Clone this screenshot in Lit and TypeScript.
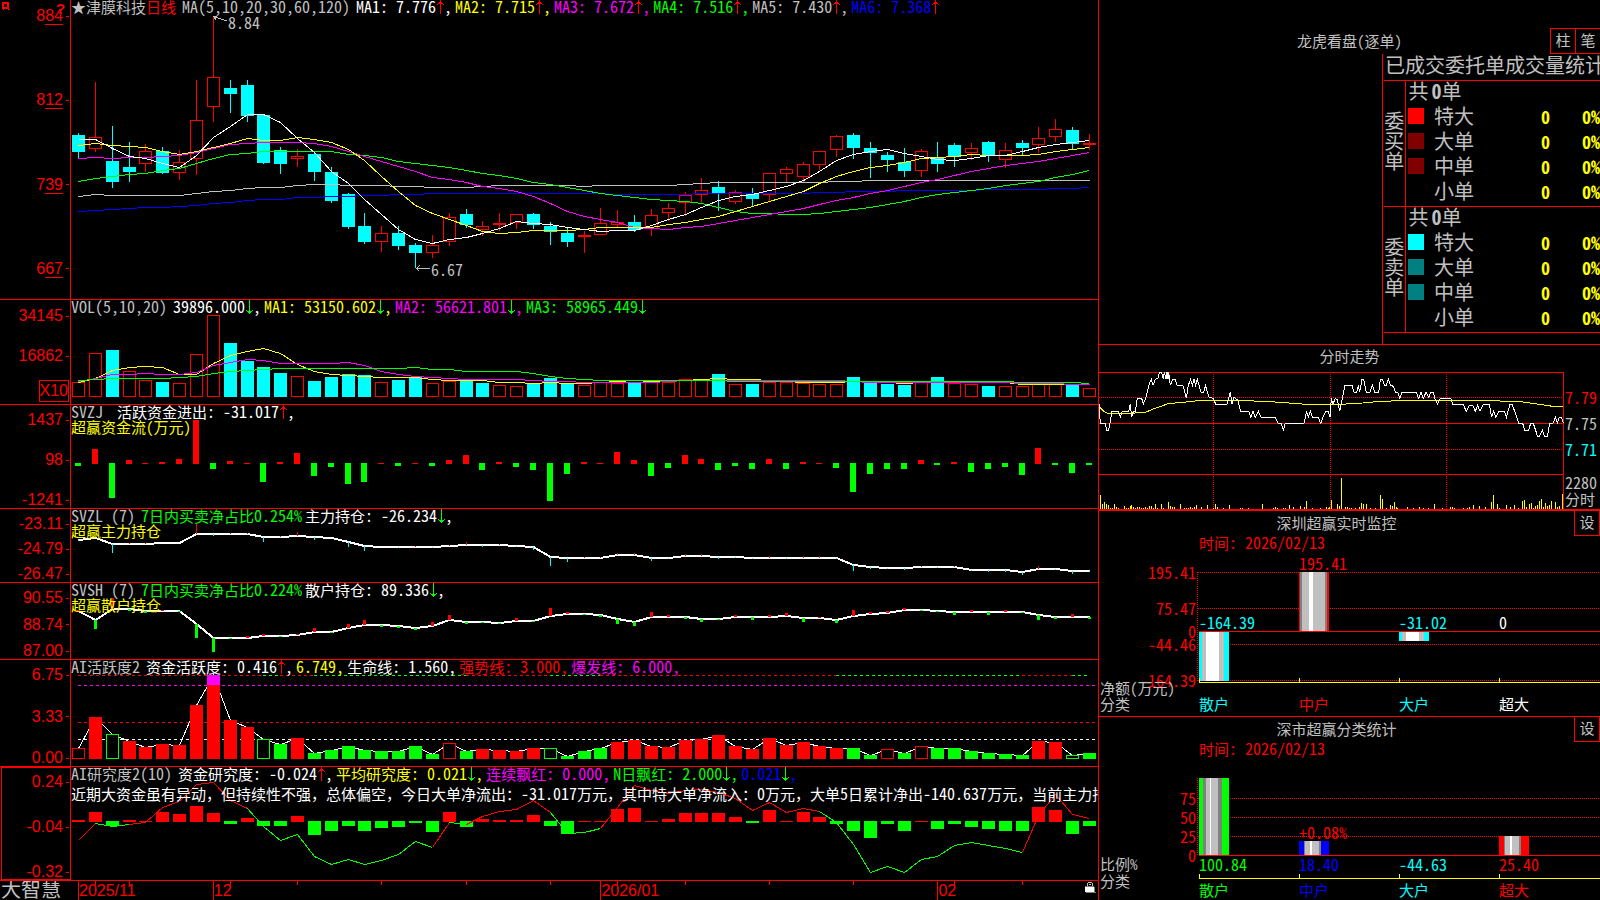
import { LitElement, html, svg, css, nothing } from "lit";

const RED = "#ff0000";
const CYAN = "#00ffff";
const GREEN = "#00ff00";
const YELLOW = "#ffff00";
const MAGENTA = "#ff00ff";
const BLUE = "#0000ff";
const GREY = "#c0c0c0";
const WHITE = "#ffffff";

const PLOT_W = 1027;
const STEP = 16.85;
const cx = (i: number) => 7 + Math.round(STEP * i);

/* High, body top, body bottom and low of each day; "c" falls, "r" rises. */
const CANDLES: [string, number, number, number, number][] = [
  ["c", 133, 135, 152, 158], ["r", 82, 137, 149, 152], ["c", 126, 161, 182, 188], ["c", 142, 167, 172, 182],
  ["r", 144, 151, 164, 172], ["c", 147, 151, 173, 174], ["r", 150, 162, 173, 180], ["r", 80, 120, 159, 175],
  ["r", 17, 77, 107, 122], ["c", 80, 88, 94, 113], ["c", 80, 85, 116, 122], ["c", 114, 115, 163, 164],
  ["c", 147, 150, 164, 174], ["r", 149, 156, 159, 167], ["c", 152, 154, 172, 181], ["c", 167, 172, 201, 203],
  ["c", 193, 194, 227, 229], ["c", 213, 226, 242, 244], ["r", 226, 233, 242, 252], ["c", 226, 233, 246, 250],
  ["c", 243, 245, 253, 268], ["r", 235, 245, 253, 258], ["r", 213, 217, 242, 246], ["c", 209, 214, 225, 228],
  ["r", 221, 226, 230, 236], ["r", 213, 223, 225, 231], ["r", 214, 214, 223, 229], ["c", 213, 214, 225, 229],
  ["c", 222, 226, 232, 245], ["c", 228, 233, 242, 247], ["r", 231, 235, 237, 253], ["r", 208, 223, 235, 235],
  ["r", 210, 222, 225, 228], ["c", 215, 222, 230, 232], ["r", 209, 215, 229, 236], ["r", 203, 208, 213, 221],
  ["r", 192, 195, 203, 216], ["r", 178, 190, 195, 203], ["c", 181, 187, 193, 211], ["r", 190, 192, 202, 204],
  ["c", 188, 194, 199, 206], ["r", 173, 173, 195, 201], ["r", 167, 169, 174, 182], ["r", 162, 164, 177, 182],
  ["r", 151, 151, 165, 170], ["r", 135, 136, 150, 157], ["c", 133, 135, 148, 159], ["c", 142, 148, 153, 178],
  ["c", 152, 155, 160, 172], ["c", 148, 162, 171, 177], ["r", 149, 151, 171, 177], ["c", 142, 158, 164, 172],
  ["c", 143, 145, 157, 167], ["r", 143, 148, 153, 160], ["c", 141, 142, 156, 162], ["r", 143, 150, 160, 168],
  ["c", 140, 143, 148, 155], ["r", 127, 138, 145, 153], ["r", 119, 129, 137, 142], ["c", 127, 130, 144, 150],
  ["r", 134, 143, 145, 150],
];

const MA: [string, number[]][] = [
  [BLUE, [211, 210, 209, 208, 207, 207, 206, 205, 203, 202, 200, 199, 199, 197, 197, 196, 196, 195, 195, 194, 194, 193, 193, 193, 193, 193, 193, 193, 193, 193, 193, 193, 194, 194, 194, 194, 194, 193, 193, 193, 193, 193, 193, 193, 192, 192, 191, 191, 191, 190, 190, 190, 190, 190, 189, 189, 189, 189, 188, 188, 187]],
  [GREY, [196, 194, 195, 195, 195, 195, 195, 193, 191, 190, 188, 187, 187, 185, 184, 184, 185, 185, 185, 186, 186, 187, 187, 187, 186, 185, 185, 185, 185, 185, 186, 185, 185, 185, 185, 185, 184, 183, 182, 182, 182, 182, 182, 182, 182, 181, 181, 180, 180, 180, 180, 180, 180, 180, 180, 180, 180, 180, 180, 180, 180]],
  [GREEN, [181, 178, 176, 174, 173, 170, 168, 163, 158, 154, 153, 151, 151, 151, 151, 151, 154, 155, 157, 161, 163, 165, 167, 170, 173, 175, 178, 182, 184, 187, 190, 193, 195, 197, 199, 200, 201, 203, 207, 211, 213, 213, 214, 214, 213, 211, 209, 207, 204, 201, 197, 194, 192, 190, 188, 185, 183, 181, 177, 174, 170]],
  [MAGENTA, [158, 157, 158, 157, 157, 156, 155, 152, 148, 144, 143, 142, 142, 142, 143, 146, 151, 156, 161, 166, 171, 177, 179, 182, 186, 188, 191, 196, 203, 211, 216, 219, 222, 227, 228, 229, 227, 226, 223, 220, 217, 214, 211, 208, 204, 200, 197, 193, 190, 186, 182, 179, 175, 171, 168, 165, 163, 161, 158, 155, 152]],
  [YELLOW, [145, 143, 145, 146, 147, 151, 154, 151, 147, 143, 138, 140, 140, 137, 139, 142, 149, 160, 176, 191, 205, 213, 219, 225, 231, 233, 232, 230, 230, 230, 229, 227, 227, 227, 227, 224, 222, 219, 216, 211, 206, 201, 196, 191, 183, 176, 171, 167, 165, 162, 158, 157, 156, 154, 155, 155, 155, 154, 151, 149, 147]],
  [WHITE, [139, 139, 148, 156, 158, 163, 167, 155, 137, 126, 114, 114, 122, 138, 152, 171, 183, 199, 214, 229, 239, 243, 239, 237, 233, 228, 221, 223, 224, 227, 229, 231, 230, 230, 225, 219, 214, 207, 200, 196, 194, 190, 186, 180, 171, 160, 154, 151, 149, 153, 156, 159, 160, 158, 155, 155, 151, 147, 144, 142, 140]],
];

/* Bars of the volume pane; a negative sign marks a falling day. */
const VOLUME = [15, 44, -47, 26, 17, -15, 14, 43, 82, -54, -36, -30, -24, 21, -16, -20, -23, -22, 15, -17, -20, 14, 16, -16, -14, 12, 11, -13, -19, -13, 12, 15, 14, -15, 17, 15, 18, 18, -23, 13, -13, 15, 15, 14, 13, 13, -20, -15, -13, -12, 16, -20, 14, 13, -11, 11, 11, 15, 13, -12, 9];

const VOLUME_MA: [string, number[]][] = [
  [YELLOW, [82, 78, 70, 67, 66, 67, 74, 74, 63, 55, 51, 48, 53, 64, 71, 74, 75, 76, 77, 77, 77, 79, 80, 80, 80, 82, 82, 83, 82, 83, 83, 82, 81, 82, 81, 81, 80, 79, 78, 79, 79, 80, 81, 82, 82, 82, 81, 82, 82, 83, 82, 82, 82, 82, 82, 82, 84, 84, 84, 84, 84]],
  [MAGENTA, [81, 78, 74, 74, 73, 74, 74, 72, 65, 62, 59, 60, 63, 63, 63, 63, 62, 65, 71, 74, 76, 77, 78, 79, 79, 79, 79, 80, 81, 81, 82, 82, 82, 82, 82, 81, 80, 80, 80, 80, 80, 80, 80, 80, 80, 80, 81, 82, 82, 82, 82, 82, 82, 82, 82, 82, 83, 83, 83, 84, 84]],
  [GREEN, [80, 79, 78, 78, 78, 78, 77, 76, 73, 71, 70, 69, 68, 68, 68, 68, 68, 68, 68, 68, 67, 69, 69, 71, 71, 71, 71, 73, 76, 78, 79, 80, 80, 80, 80, 80, 80, 80, 80, 81, 81, 81, 81, 81, 81, 81, 81, 81, 81, 81, 81, 81, 81, 81, 81, 81, 82, 82, 82, 82, 83]],
];

const FLOW = [-3, 15, -35, 4, 1, 2, 5, 44, -6, 3, 1, -19, 2, 11, -13, -4, -21, -19, 1, -3, 1, -3, 4, 9, -7, 2, -4, -7, -38, -11, 2, 1, 12, 4, -13, -5, 9, 5, -7, -3, -6, 5, -6, 2, 1, -5, -29, -11, -6, -6, 4, -2, 2, -9, -6, -4, -12, 16, -2, -10, -2];

const MAIN_HOLD = [31, 29, 35, 35, 35, 34, 34, 25, 25, 25, 25, 28, 28, 27, 28, 29, 33, 37, 38, 38, 38, 38, 37, 36, 36, 36, 37, 38, 48, 49, 49, 49, 46, 46, 49, 49, 47, 47, 48, 48, 49, 49, 49, 49, 49, 49, 56, 58, 59, 59, 58, 58, 58, 61, 61, 61, 63, 60, 60, 62, 62];
const MAIN_TICKS = [-1, 0, -9, 1, 1, 0, 0, 10, -2, 1, 1, -5, 1, 4, -3, 0, -5, -5, 0, -1, 1, -1, 1, 3, -2, 1, -1, -3, -9, -4, 1, 1, 2, 2, -3, -1, 2, 2, -2, -1, -1, 2, -1, 2, 2, -1, -6, -2, -1, -2, 1, -1, 1, -1, -2, -2, -3, 3, -1, -3, -1];

const RETAIL_HOLD = [28, 37, 26, 26, 28, 28, 28, 41, 55, 55, 55, 53, 53, 52, 49, 49, 45, 42, 42, 43, 45, 43, 37, 39, 39, 40, 38, 38, 33, 31, 31, 32, 36, 39, 34, 34, 34, 36, 36, 34, 34, 34, 33, 35, 35, 37, 33, 31, 30, 27, 27, 28, 29, 29, 29, 29, 29, 32, 34, 34, 34];
const RETAIL_TICKS = [1, -9, 11, -2, -2, 1, -1, -14, -14, -1, 2, 2, -1, 1, 4, -1, 4, 5, -2, -2, -2, 4, 5, -2, -1, -1, 3, -1, 8, 2, -1, -2, -5, -4, 5, 2, -2, -3, -1, 2, -3, 2, 3, -4, 1, -3, 6, 2, 2, 2, -1, -1, -3, 2, -3, 2, -1, -5, -2, 3, -2];

/* Activity: lower case is a filled bar, upper case an outlined one. */
const ACTIVITY = "R88 r57 G74 r81 r87 r84 r85 r45 r25 r60 r67 G79 g84 r78 g93 g90 g86 g90 g91 g91 g86 g94 R83 g91 r89 r90 r91 r88 G88 g96 g91 g88 r82 r80 r86 r87 r80 r79 r75 r86 r89 r78 r85 r82 r86 r88 g88 g95 R89 g93 R86 g88 g88 g91 g93 g94 g95 r81 r82 G95 g93"
  .split(" ").map((s) => [s[0], Number(s.slice(1))] as [string, number]);
const ACTIVITY_TREND: [string, number, number][] = [
  [RED, 0, 11], [GREEN, 11, 12], [RED, 12, 14], [GREEN, 14, 23], [RED, 23, 28], [GREEN, 28, 31],
  [RED, 31, 45], [GREEN, 45, 56], [RED, 56, 59], [GREEN, 59, 60],
];

const STUDY = [2, 10, -5, 2, 1, 10, 8, 16, 9, -3, 4, -5, -5, 6, -14, -10, -5, -10, -7, -6, -2, -11, 10, -6, 3, 2, 2, 7, -5, -13, 1, 1, 13, 14, 1, 3, 9, 9, 9, 5, -2, 12, 1, 10, 5, -3, -10, -17, -3, -10, 1, -8, -3, -6, -8, -10, -10, 15, 12, -13, -5];
const STUDY_LINE = [73, 56, 59, 57, 55, 40, 34, 17, 15, 33, 41, 59, 73, 67, 89, 97, 92, 97, 93, 87, 74, 80, 55, 57, 49, 44, 42, 33, 45, 66, 65, 61, 40, 18, 23, 26, 23, 22, 25, 31, 43, 35, 45, 41, 44, 55, 77, 105, 99, 105, 92, 89, 78, 75, 78, 81, 85, 48, 27, 47, 51];
const STUDY_SEGMENTS: [string, number, number][] = [
  [RED, 0, 1], [GREEN, 1, 3], [RED, 3, 10], [GREEN, 10, 21], [RED, 21, 22], [GREEN, 22, 23], [RED, 23, 28],
  [GREEN, 28, 31], [RED, 31, 44], [GREEN, 44, 56], [RED, 56, 60],
];

const DAY_PRICE = "9,192 13,250 27,250 32,270 38,270 42,250 48,214 68,214 73,232 79,214 98,214 103,192 107,232 112,214 118,214 124,175 137,175 142,192 150,172 160,130 166,118 171,136 178,118 186,115 190,97 197,97 202,118 205,97 210,118 213,97 216,118 218,97 223,136 230,118 237,118 243,136 260,136 266,154 271,175 277,136 284,118 289,136 294,118 299,136 304,118 315,157 323,157 328,136 339,172 352,175 359,192 393,192 403,157 408,192 413,172 425,180 434,214 458,214 464,232 471,214 478,232 487,214 495,232 537,232 546,250 556,250 562,270 568,250 624,250 632,214 637,232 643,214 649,232 667,232 674,250 681,232 690,214 697,214 702,232 706,175 711,192 718,175 724,180 731,214 738,180 747,136 768,136 774,157 782,157 787,136 791,157 798,118 803,118 811,157 822,157 829,136 836,157 848,157 853,118 859,118 865,136 871,136 877,118 884,136 892,139 899,157 905,157 911,175 918,157 961,157 968,175 975,157 982,175 990,157 998,172 1004,157 1012,157 1018,180 1024,192 1033,175 1064,175 1070,192 1101,192 1111,214 1120,195 1130,195 1138,214 1145,195 1152,214 1162,192 1180,192 1187,232 1193,214 1199,232 1208,214 1225,214 1231,232 1242,192 1248,192 1256,214 1268,250 1280,250 1286,270 1298,270 1304,250 1312,250 1325,290 1330,290 1339,270 1346,290 1354,290 1361,250 1371,250 1378,232 1384,250 1390,232 1396,232 1402,250";
const DAY_AVERAGE = "9,200 22,213 34,219 118,219 150,216 177,205 217,191 260,187 315,181 430,181 538,186 630,193 735,193 800,189 850,184 960,181 1150,181 1275,185 1310,190 1370,199 1402,199";
const DAY_VOLUME = "13:465 19:492 25:486 31:492 37:495 43:504 49:504 55:492 61:501 67:504 85:498 91:504 97:504 103:498 106:495 112:501 118:504 124:501 130:501 136:504 142:504 148:501 154:504 160:498 166:498 172:504 178:492 184:504 196:492 202:504 217:486 223:498 229:501 235:501 253:492 265:504 271:504 277:504 283:501 289:504 295:501 301:495 316:501 334:495 352:504 358:492 364:501 382:504 400:495 433:504 439:504 457:504 499:492 532:504 538:501 544:504 562:504 568:504 580:495 592:501 613:498 625:501 631:483 649:504 673:504 691:501 697:504 701:501 706:480 724:492 730:498 736:414 748:501 754:501 760:504 766:504 778:504 790:501 796:489 802:492 811:492 823:504 838:504 853:465 859:477 871:504 883:495 889:498 895:486 901:501 904:504 935:501 952:504 970:501 983:504 998:504 1015:492 1039:504 1063:501 1069:501 1075:504 1103:504 1114:504 1120:501 1132:495 1150:498 1168:501 1186:486 1192:465 1204:492 1210:504 1231:495 1243:501 1255:495 1267:504 1279:483 1285:480 1291:501 1300:492 1306:489 1312:504 1318:498 1324:495 1330:483 1336:477 1342:501 1348:489 1354:498 1360:495 1366:483 1378:486 1384:501 1390:498 1400:462"
  .split(" ").map((s) => s.split(":").map(Number));

type Item = { text: string; color: string; arrow?: "up" | "down"; end?: string };

/* Chinese runs are set one size smaller than the half-width Latin ones. */
const mixed = (text: string) =>
  text.split(/([^\x00-\xff]+)/).map((part, i) => (i % 2 ? html`<span class="zh">${part}</span>` : part));

const arrow = (dir: "up" | "down") => html`<svg class="arrow" width="8" height="16" viewBox="0 0 8 16" aria-hidden="true">
  ${dir === "up"
    ? svg`<path d="M4 0h1v14H4zM3 2h3v1H3zM2 3h5v1H2zM1 4h1v1H1zM7 4h1v1H7z" fill=${RED} />`
    : svg`<path d="M4 0h1v14H4zM3 12h3v1H3zM2 11h5v1H2zM1 10h1v1H1zM7 10h1v1H7z" fill=${GREEN} />`}
</svg>`;

const header = (name: unknown, items: Item[]) => html`<header class="head">
  <h2 class="name">${name}</h2>
  ${items.map((it) => html`<span class="item" style="color:${it.color}">${mixed(it.text)}${it.arrow ? arrow(it.arrow) : nothing}${it.end ?? ","}</span>`)}
</header>`;

const line = (ys: number[], color: string, from = 0, to = ys.length - 1, width = 1) =>
  svg`<polyline class="line" points=${ys.slice(from, to + 1).map((y, k) => `${cx(from + k) + 0.5},${width % 2 ? y + 0.5 : y}`).join(" ")} stroke=${color} stroke-width=${width} />`;

const box = (i: number, top: number, bottom: number, color: string, filled: boolean) =>
  filled
    ? svg`<rect x=${cx(i) - 6} y=${top} width="13" height=${Math.max(1, bottom - top)} fill=${color} />`
    : svg`<rect class="outline" x=${cx(i) - 5.5} y=${top + 0.5} width="12" height=${Math.max(1, bottom - top - 1)} stroke=${color} />`;

const plot = (h: number, content: unknown) =>
  html`<svg class="plot" viewBox="0 0 ${PLOT_W} ${h}" preserveAspectRatio="none" aria-hidden="true">${content}</svg>`;

const dashes = (y: number, color: string, from: number, to: number) =>
  svg`<line class="dash" x1=${from} x2=${to} y1=${y + 0.5} y2=${y + 0.5} stroke=${color} />`;

class AppRoot extends LitElement {
  static styles = css`
    :host {
      display: block;
      font: 400 16px/14px "Noto Sans CJK SC", "Noto Sans", sans-serif;
      font-feature-settings: "hwid";
      color: #c0c0c0;
      background: #000;
    }
    * { box-sizing: border-box; }
    h2, h3, ul, p, table { margin: 0; padding: 0; font: inherit; list-style: none; }
    button {
      margin: 0; padding: 0; border: 1px solid #f00; background: #000; color: #c0c0c0;
      font: inherit; font-size: 15px; cursor: pointer;
    }
    .screen {
      display: grid; grid-template-columns: minmax(0, 1fr) 501px;
      height: 100vh; min-height: 700px; overflow: hidden;
    }
    .left {
      display: grid; min-height: 0; border-right: 1px solid #f00;
      grid-template-rows: minmax(0, 300fr) minmax(0, 105fr) minmax(0, 104fr) minmax(0, 74fr) minmax(0, 77fr) minmax(0, 107fr) minmax(0, 114fr) minmax(0, 19fr);
    }
    .zh { font-size: 15px; font-feature-settings: normal; }
    .panel {
      position: relative; display: grid; min-height: 0; border-bottom: 1px solid #f00;
      grid-template-columns: 71px minmax(0, 1fr); grid-template-rows: minmax(0, 1fr);
    }
    .axis {
      display: flex; flex-direction: column; justify-content: space-between; align-items: flex-end;
      padding: 7px 0 0; border-right: 1px solid #f00; color: #f00;
      font: 400 16px/18px "Liberation Sans", Arial, sans-serif;
    }
    .axis li { display: flex; align-items: center; gap: 3px; height: 16px; }
    .axis li::after { content: ""; width: 3px; height: 1px; margin-right: 1px; background: #f00; }
    .axis u { text-decoration: none; border-bottom: 1px solid #f00; }
    .axis.price { padding: 8px 0 22px; }
    .axis.volume { padding: 8px 0 2px; }
    .axis .unit { height: 22px; margin: -8px 1px 0 0; border: 1px solid #f00; }
    .axis .unit::after { display: none; }
    .axis.study { margin-left: 1px; outline: 1px solid #f00; outline-offset: -1px; }
    .view { display: grid; min-width: 0; min-height: 0; grid-template: minmax(0, 1fr) / minmax(0, 1fr); }
    .view > * { grid-area: 1 / 1; min-width: 0; }
    .plot { display: block; width: 100%; height: 100%; min-height: 0; shape-rendering: crispEdges; overflow: hidden; }
    .line { fill: none; vector-effect: non-scaling-stroke; }
    .outline { fill: #000; stroke-width: 1; }
    .dash { stroke-dasharray: 3 3; }
    .dot { stroke-dasharray: 1 1; }
    .text { position: relative; align-self: start; white-space: nowrap; }
    .head { display: flex; gap: 3px; height: 15px; line-height: 13px; white-space: pre; }
    .name { margin-right: 3px; }
    .name b { margin-right: 6px; color: #f00; font-weight: inherit; }
    .item { display: flex; }
    .arrow { display: block; shape-rendering: crispEdges; }
    .sub { color: #ff0; font-size: 15px; line-height: 13px; }
    .note { height: 16px; margin-top: 4px; color: #fff; overflow-x: clip; }
    .mark { position: absolute; display: flex; align-items: center; line-height: 12px; }
    .mark svg { shape-rendering: crispEdges; }
    .pin { position: absolute; top: 2px; left: 2px; }
    .help {
      position: absolute; top: 2px; left: 56px; border: 0; background: none; color: #f00;
      font: 700 15px/13px "Liberation Sans", Arial, sans-serif;
    }

    .times { display: grid; grid-template-columns: 71px minmax(0, 1fr); min-height: 0; }
    .brand { padding-left: 1px; font-size: 20px; line-height: 16px; }
    .months {
      display: grid; grid-template-columns: 800fr 2300fr 2000fr 953fr; padding-left: 7px; color: #f00;
      font: 400 16px/19px "Liberation Sans", Arial, sans-serif;
    }
    .months time { border-left: 1px solid #f00; }
    .months time:last-child { display: flex; justify-content: space-between; }
    .lock { margin: 1px 2px 0 0; shape-rendering: crispEdges; }

    .right {
      display: grid; min-height: 0; min-width: 0;
      grid-template-rows: minmax(0, 345fr) minmax(0, 166fr) minmax(0, 206fr) minmax(0, 183fr);
    }
    .right > section { min-height: 0; overflow: hidden; border-bottom: 1px solid #f00; }
    .right > section:last-child { border-bottom: 0; }
    .title { font-size: 15px; text-align: center; }
    .orders { display: flex; flex-direction: column; padding-top: 28px; }
    .bar { display: grid; grid-template-columns: 50px 1fr 50px; align-items: center; height: 26px; }
    .tools { display: flex; height: 26px; margin-right: -1px; }
    .tools button { width: 26px; height: 26px; margin-right: -1px; padding-bottom: 2px; }
    .book {
      flex: 1; width: 218px; margin-left: auto; padding-left: 1px; border-left: 1px solid #f00;
      font-size: 20px; line-height: 20px; overflow: hidden;
    }
    .book h3 { height: 26px; padding-left: 1px; line-height: 22px; white-space: nowrap; }
    .book table { width: 216px; border-collapse: collapse; table-layout: fixed; }
    .book th, .book td { height: 25px; padding: 0 0 5px; font-weight: inherit; text-align: left; }
    .book tbody { border-top: 1px solid #f00; border-bottom: 1px solid #f00; }
    .book .side { border-right: 1px solid #f00; text-align: center; vertical-align: middle; }
    .book .side span { display: block; width: 20px; margin: 0 auto; }
    .c-side { width: 21px; }
    .c-swatch { width: 29px; }
    .c-name { width: 52px; }
    .c-pct { width: 50px; }
    .book .total { padding-left: 3px; }
    .total b { margin-left: 3px; }
    .swatch { display: block; width: 16px; height: 16px; margin-left: 2px; }
    .book .num { color: #ff0; font-size: 18px; line-height: 18px; font-weight: 700; text-align: right; }

    .right .trend { border-bottom-width: 2px; padding-top: 4px; }
    .trend .title { height: 16px; }
    .trend-body { display: grid; grid-template-columns: 465px 1fr; margin-top: 7px; }
    .trend-body svg, .chart svg { display: block; shape-rendering: crispEdges; }
    .chart svg { overflow: visible; }
    .scale { display: flex; flex-direction: column; gap: 12px; padding: 18px 0 0 1px; }
    .scale .up { color: #f00; }
    .scale .down { color: #0ff; }
    .scale .max { margin-top: 7px; }
    .scale .unit { margin-top: -9px; font-size: 15px; }
    .chart-head { display: grid; grid-template-columns: 1fr 26px; align-items: center; height: 25px; }
    .chart-head .title { padding-bottom: 2px; }
    .chart-head button { height: 25px; padding-bottom: 2px; border-top: 0; }
    .date { height: 16px; margin-left: 100px; line-height: 12px; color: #f00; }
    .t { font-size: 16px; }
    .z { font-size: 15px; }
    .end { text-anchor: end; }
  `;

  private axis(cls: string, labels: unknown[]) {
    return html`<ul class="axis ${cls}">${labels.map((l) => html`<li><span>${l}</span></li>`)}</ul>`;
  }

  private pricePanel() {
    const label = (a: string, b: string) => html`${a}<u>${b}</u>`;
    return html`<section class="panel">
      ${this.axis("price", [label("8", "84"), label("8", "12"), label("7", "39"), label("6", "67")])}
      <svg class="pin" width="8" height="9" viewBox="0 0 8 9" shape-rendering="crispEdges"><path d="M0 0h7v7H0zM2 2v3h3V2z" fill=${RED} fill-rule="evenodd" /><path d="M1 6h1v2H1zM6 7h2v1H6z" fill=${RED} /></svg>
      <button class="help" aria-label="帮助">?</button>
      <div class="view">
        ${plot(299, svg`
          ${CANDLES.map(([kind, hi, top, bottom, lo], i) => {
            const color = kind === "c" ? CYAN : RED;
            return svg`<rect x=${cx(i)} y=${hi} width="1" height=${lo - hi} fill=${color} />${box(i, top, bottom, color, kind === "c")}`;
          })}
          ${MA.map(([color, ys]) => line(ys, color))}`)}
        <div class="text">
          ${header(html`${mixed("★津膜科技")}<b>${mixed("日线")}</b>MA(5,10,20,30,60,120)`, [
            { text: "MA1: 7.776", color: WHITE, arrow: "up" },
            { text: "MA2: 7.715", color: YELLOW, arrow: "up" },
            { text: "MA3: 7.672", color: MAGENTA, arrow: "up" },
            { text: "MA4: 7.516", color: GREEN, arrow: "up" },
            { text: "MA5: 7.430", color: GREY, arrow: "up" },
            { text: "MA6: 7.368", color: BLUE, arrow: "up", end: "" },
          ])}
        </div>
      </div>
      <span class="mark" style="left:calc(71px + (100% - 71px) * ${142 / PLOT_W});top:${(14 / 299) * 100}%">
        <svg width="15" height="16" viewBox="0 0 15 16"><path d="M.5 2.5L14 7M0 2.5h4M1 3l2 3" fill="none" stroke=${GREY} /></svg>8.84</span>
      <span class="mark" style="left:calc(71px + (100% - 71px) * ${345 / PLOT_W});top:${(261 / 299) * 100}%">
        <svg width="15" height="16" viewBox="0 0 15 16"><path d="M0 7.5h14M.5 7.5l3-3M.5 7.5l3 3" fill="none" stroke=${GREY} /></svg>6.67</span>
    </section>`;
  }

  private volumePanel() {
    return html`<section class="panel">
      <ul class="axis volume"><li>34145</li><li>16862</li><li class="unit">X10</li></ul>
      <div class="view">
        ${plot(104, svg`
          ${VOLUME.map((v, i) => box(i, 97 - Math.abs(v), 97, v < 0 ? CYAN : RED, v < 0))}
          ${VOLUME_MA.map(([color, ys]) => line(ys, color))}`)}
        <div class="text">${header("VOL(5,10,20)", [
          { text: "39896.000", color: WHITE, arrow: "down" },
          { text: "MA1: 53150.602", color: YELLOW, arrow: "down" },
          { text: "MA2: 56621.801", color: MAGENTA, arrow: "down" },
          { text: "MA3: 58965.449", color: GREEN, arrow: "down", end: "" },
        ])}</div>
      </div>
    </section>`;
  }

  private flowPanel() {
    return html`<section class="panel">
      ${this.axis("flow", ["1437", "98", "-1241"])}
      <div class="view">
        ${plot(103, FLOW.map((v, i) => v > 0
          ? svg`<rect x=${cx(i) - 3} y=${59 - v} width="6" height=${v} fill=${RED} />`
          : svg`<rect x=${cx(i) - 3} y="58" width="6" height=${-v} fill=${GREEN} />`))}
        <div class="text">
          ${header("SVZJ ", [{ text: "活跃资金进出: -31.017", color: WHITE, arrow: "up" }])}
          <p class="sub">超赢资金流(万元)</p>
        </div>
      </div>
    </section>`;
  }

  private holdPanel(h: number, labels: string[], ys: number[], ticks: number[], w: number, down: string, name: string, items: Item[], sub: string) {
    return html`<section class="panel">
      ${this.axis("", labels)}
      <div class="view">
        ${plot(h, svg`
          ${line(ys, WHITE, 0, ys.length - 1, 2)}
          ${ticks.map((v, i) => v
            ? svg`<rect x=${cx(i) - (w >> 1)} y=${v > 0 ? ys[i] - v : ys[i]} width=${w} height=${Math.abs(v)} fill=${v > 0 ? RED : down} />`
            : nothing)}`)}
        <div class="text">${header(name, items)}<p class="sub">${sub}</p></div>
      </div>
    </section>`;
  }

  private activityPanel() {
    return html`<section class="panel">
      ${this.axis("", ["6.75", "3.33", "0.00"])}
      <div class="view">
        ${plot(106, svg`
          ${ACTIVITY_TREND.map(([color, a, b]) => dashes(15, color, cx(a), cx(b)))}
          ${dashes(25, MAGENTA, 7, PLOT_W)}${dashes(62, RED, 7, PLOT_W)}${dashes(79, WHITE, 7, PLOT_W)}
          ${line(ACTIVITY.map(([, y]) => (y === 25 ? 15 : y)), WHITE)}
          ${ACTIVITY.map(([kind, y], i) => box(i, y, 99, kind.toLowerCase() === "r" ? RED : GREEN, kind === kind.toLowerCase()))}
          ${box(8, 15, 25, MAGENTA, true)}`)}
        <div class="text">${header(mixed("AI活跃度2"), [
          { text: "资金活跃度: 0.416", color: WHITE, arrow: "up" },
          { text: "6.749", color: YELLOW },
          { text: "生命线: 1.560", color: WHITE },
          { text: "强势线: 3.000", color: RED },
          { text: "爆发线: 6.000", color: MAGENTA },
        ])}</div>
      </div>
    </section>`;
  }

  private studyPanel() {
    return html`<section class="panel">
      ${this.axis("study", ["0.24", "-0.04", "-0.32"])}
      <div class="view">
        ${plot(113, svg`
          ${STUDY.map((v, i) => box(i, v > 0 ? 55 - v : 54, v > 0 ? 55 : 54 - v, v > 0 ? RED : GREEN, true))}
          ${STUDY_SEGMENTS.map(([color, a, b]) => line(STUDY_LINE, color, a, b))}`)}
        <div class="text">
          ${header(mixed("AI研究度2(10)"), [
            { text: "资金研究度: -0.024", color: WHITE, arrow: "up" },
            { text: "平均研究度: 0.021", color: YELLOW, arrow: "down" },
            { text: "连续飘红: 0.000", color: MAGENTA },
            { text: "N日飘红: 2.000", color: GREEN, arrow: "down" },
            { text: "0.021", color: BLUE, arrow: "down" },
          ])}
          <p class="note">${mixed("近期大资金虽有异动，但持续性不强，总体偏空，今日大单净流出：-31.017万元，其中特大单净流入：0万元，大单5日累计净出-140.637万元，当前主力持")}</p>
        </div>
      </div>
    </section>`;
  }

  private timeAxis() {
    return html`<footer class="times">
      <span class="brand">大智慧</span>
      <div class="view">
        ${plot(19, [1, 3, 9, 13, 18, 23, 28, 32, 36, 41, 46, 52, 56].map((i) => svg`<rect x=${cx(i)} y="0" width="1" height="4" fill=${RED} />`))}
        <div class="months">
          <time>2025/11</time><time>12</time><time>2026/01</time>
          <time>02<svg class="lock" width="11" height="12" viewBox="0 0 11 12" role="img" aria-label="锁定">
            <path d="M3 0h4v1H3zM2 1h1v3H2zM7 1h1v3H7zM4 2h2v1H4z" fill=${GREY} />
            <path d="M0 4h9v6H0z" fill=${WHITE} /><path d="M0 4h9v1H0zM0 10h11v1H1zM9 5h1v6H9z" fill="#808080" />
          </svg></time>
        </div>
      </div>
    </footer>`;
  }

  private orderGroup(side: string, colors: string[]) {
    const names = ["特大", "大单", "中单", "小单"];
    return html`<tbody>
      <tr><th class="side" rowspan="5" scope="rowgroup"><span>${side}</span></th><td class="total" colspan="4">共<b>0</b>单</td></tr>
      ${names.map((n, i) => html`<tr>
        <td>${colors[i] ? html`<i class="swatch" style="background:${colors[i]}"></i>` : nothing}</td>
        <th scope="row">${n}</th><td class="num">0</td><td class="num">0%</td></tr>`)}
    </tbody>`;
  }

  private ordersPanel() {
    return html`<section class="orders">
      <div class="bar"><span></span><h2 class="title">龙虎看盘(逐单)</h2>
        <div class="tools"><button>柱</button><button>笔</button></div></div>
      <div class="book">
        <h3 id="book-title">已成交委托单成交量统计</h3>
        <table aria-labelledby="book-title">
          <colgroup><col class="c-side" /><col class="c-swatch" /><col class="c-name" /><col /><col class="c-pct" /></colgroup>
          ${this.orderGroup("委买单", [RED, "#800000", "#800000"])}
          ${this.orderGroup("委卖单", [CYAN, "#008080", "#008080"])}
        </table>
      </div>
    </section>`;
  }

  private trendPanel() {
    return html`<section class="trend">
      <h2 class="title">分时走势</h2>
      <div class="trend-body">
        <svg width="465" height="137" viewBox="9 96 1395 411" aria-hidden="true">
          ${[97.5, 250.5, 403.5].map((y) => svg`<line x1="9" x2="1404" y1=${y} y2=${y} stroke=${RED} stroke-width="3" />`)}
          <line x1="1402.5" x2="1402.5" y1="96" y2="507" stroke=${RED} stroke-width="3" />
          ${[172.5, 328.5].map((y) => svg`<line x1="9" x2="1404" y1=${y} y2=${y} stroke=${RED} stroke-width="3" stroke-dasharray="3 3" />`)}
          ${[352.5, 703.5, 1051.5].map((x) => svg`<line x1=${x} x2=${x} y1="96" y2="507" stroke=${RED} stroke-width="3" stroke-dasharray="3 3" />`)}
          ${DAY_VOLUME.map(([x, y]) => svg`<rect x=${x - 1} y=${y} width="3" height=${507 - y} fill=${YELLOW} />`)}
          <polyline class="line" points=${DAY_AVERAGE} stroke=${YELLOW} />
          <polyline class="line" points=${DAY_PRICE} stroke=${WHITE} />
        </svg>
        <div class="scale"><span class="up">7.79</span><span>7.75</span><span class="down">7.71</span>
          <span class="max">2280</span><span class="unit">分时</span></div>
      </div>
    </section>`;
  }

  private column(x: number, y: number, h: number, stripes: [number, string][]) {
    let at = x;
    return stripes.map(([w, color]) => {
      const r = svg`<rect x=${at} y=${y} width=${w} height=${h} fill=${color} />`;
      at += w;
      return r;
    });
  }

  private label(x: number, y: number, text: string, color: string, cls = "t") {
    return svg`<text class=${cls} x=${x} y=${y + (cls === "z" ? 5 : 6)} fill=${color}>${text}</text>`;
  }

  private axisLine(y: number) {
    return svg`<path d="M100 ${y}H501V${y + 1}H100zM100 ${y - 4}h1v4h-1zM200 ${y - 4}h1v4h-1zM300 ${y - 4}h1v4h-1zM400 ${y - 4}h1v4h-1z" fill=${YELLOW} />`;
  }

  private dotted(x1: number, y1: number, x2: number, y2: number) {
    return svg`<line class="dot" x1=${x1} y1=${y1} x2=${x2} y2=${y2} stroke=${RED} />`;
  }

  private chartHead(title: string) {
    return html`<div class="chart-head"><h2 class="title">${title}</h2><button>设</button></div>
      <p class="date">${mixed("时间: 2026/02/13")}</p>`;
  }

  private netChart() {
    const falling: [number, string][] = [[3, CYAN], [4, GREY], [13, WHITE], [5, GREY], [5, CYAN]];
    return html`<section class="chart">
      ${this.chartHead("深圳超赢实时监控")}
      <svg width="501" height="164" viewBox="0 0 501 164">
        ${this.dotted(98.5, 20, 98.5, 129)}
        ${[20.5, 56.5, 92.5, 128.5].map((y) => this.dotted(99, y, 501, y))}
        ${this.column(100, 80, 49, falling)}
        ${this.column(200, 20, 59, [[1, RED], [2, "#808080"], [7, GREY], [4, WHITE], [12, GREY], [2, "#808080"], [2, RED]])}
        ${this.column(300, 80, 9, falling)}
        <rect x="100" y="79" width="401" height="1" fill=${RED} />
        ${this.axisLine(130)}
        ${([["195.41", 21], ["75.47", 57], ["0", 80], ["-44.46", 93], ["-164.39", 129]] as [string, number][])
          .map(([t, y]) => this.label(97, y, t, RED, "t end"))}
        ${this.label(200, 12, "195.41", RED)}${this.label(100, 71, "-164.39", CYAN)}
        ${this.label(300, 71, "-31.02", CYAN)}${this.label(400, 71, "0", WHITE)}
        ${this.label(1, 137, "净额(万元)", GREY, "z")}${this.label(1, 153, "分类", GREY, "z")}
        ${this.label(100, 153, "散户", CYAN, "z")}${this.label(200, 153, "中户", RED, "z")}
        ${this.label(300, 153, "大户", CYAN, "z")}${this.label(400, 153, "超大", WHITE, "z")}
      </svg>
    </section>`;
  }

  private shareChart() {
    const small = (c: string): [number, string][] => [[5, c], [1, "#808080"], [5, GREY], [2, WHITE], [7, GREY], [2, "#808080"], [8, c]];
    return html`<section class="chart">
      ${this.chartHead("深市超赢分类统计")}
      <svg width="501" height="142" viewBox="0 0 501 142">
        ${this.dotted(98.5, 20, 98.5, 97)}
        ${[40.5, 59.5, 78.5].map((y) => this.dotted(99, y, 501, y))}
        ${this.column(100, 20, 77, [[4, GREEN], [3, "#808080"], [4, GREY], [1, WHITE], [7, GREY], [4, "#808080"], [7, GREEN]])}
        ${this.column(200, 83, 14, small(BLUE))}
        ${this.column(400, 78, 19, small(RED))}
        <rect x="100" y="97" width="401" height="1" fill=${RED} />
        ${this.axisLine(120)}
        ${([["75", 41], ["50", 60], ["25", 79], ["0", 98]] as [string, number][])
          .map(([t, y]) => this.label(97, y, t, RED, "t end"))}
        ${this.label(200, 75, "+0.08%", RED)}
        ${this.label(100, 107, "100.84", GREEN)}${this.label(200, 107, "18.40", BLUE)}
        ${this.label(300, 107, "-44.63", CYAN)}${this.label(400, 107, "25.40", RED)}
        ${this.label(1, 107, "比例%", GREY, "z")}${this.label(1, 124, "分类", GREY, "z")}
        ${this.label(100, 133, "散户", GREEN, "z")}${this.label(200, 133, "中户", BLUE, "z")}
        ${this.label(300, 133, "大户", CYAN, "z")}${this.label(400, 133, "超大", RED, "z")}
      </svg>
    </section>`;
  }

  render() {
    return html`<main class="screen">
      <div class="left">
        ${this.pricePanel()}
        ${this.volumePanel()}
        ${this.flowPanel()}
        ${this.holdPanel(73, ["-23.11", "-24.79", "-26.47"], MAIN_HOLD, MAIN_TICKS, 1, CYAN, "SVZL (7)", [
          { text: "7日内买卖净占比0.254%", color: GREEN, end: "" },
          { text: "主力持仓: -26.234", color: WHITE, arrow: "down" },
        ], "超赢主力持仓")}
        ${this.holdPanel(76, ["90.55", "88.74", "87.00"], RETAIL_HOLD, RETAIL_TICKS, 3, GREEN, "SVSH (7)", [
          { text: "7日内买卖净占比0.224%", color: GREEN, end: "" },
          { text: "散户持仓: 89.336", color: WHITE, arrow: "down" },
        ], "超赢散户持仓")}
        ${this.activityPanel()}
        ${this.studyPanel()}
        ${this.timeAxis()}
      </div>
      <aside class="right">
        ${this.ordersPanel()}
        ${this.trendPanel()}
        ${this.netChart()}
        ${this.shareChart()}
      </aside>
    </main>`;
  }
}

customElements.define("app-root", AppRoot);
